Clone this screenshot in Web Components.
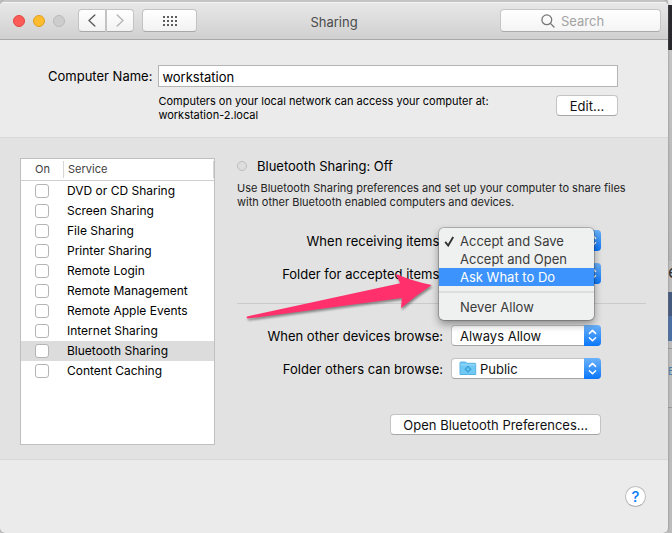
<!DOCTYPE html>
<html lang="en">
<head>
<meta charset="utf-8">
<title>Sharing</title>
<style>
  html, body { margin: 0; min-height: 100vh; }
  body { display: flex; font: 13px/16px Inter, "Liberation Sans", sans-serif; color: #000; background: #c9c9c9; }
</style>
</head>
<body>
<sharing-window></sharing-window>
<desktop-edge></desktop-edge>

<template id="t-window">
  <style>
    :host { flex: 1; min-width: 0; display: flex; flex-direction: column; background: #ebebeb; border-top: 2px solid #c4c4c4; border-radius: 5px; box-sizing: border-box; box-shadow: 0 0 2px #777; z-index: 1; overflow: hidden; }
    main { display: flex; flex-direction: column; flex: 1; }
    .panes { display: flex; gap: 22px; align-items: stretch; background: #e2e2e2; border: solid #d8d8d8; border-width: 1px 0; padding: 20px 22px 14px 20px; }
    footer { display: flex; justify-content: flex-end; padding: 26px 22px; }
    .help { width: 21px; height: 21px; border-radius: 50%; border: 1px solid #bdbdbd; border-bottom-color: #a8a8a8; background: #fff; color: #0c7dfa; font: 500 15px/18px Inter, sans-serif; padding: 0; }
  </style>
  <title-bar></title-bar>
  <main>
    <computer-name></computer-name>
    <section class="panes">
      <service-list></service-list>
      <bluetooth-pane></bluetooth-pane>
    </section>
    <footer><button class="help" aria-label="Help">?</button></footer>
  </main>
</template>

<template id="t-title">
  <style>
    :host { display: grid; grid-template-columns: 1fr auto 1fr; align-items: center; height: 37px; background: linear-gradient(#e8e8e8, #d0d0d0); border-bottom: 1px solid #a9a9a9; padding: 0 7px; box-shadow: inset 0 1px #f4f4f4; }
    .left { display: flex; align-items: center; gap: 8px; margin-left: 6px; }
    .dot { width: 12px; height: 12px; border-radius: 50%; padding: 0; border: 1px solid #e2463f; background: #fc5b57; }
    .dot.min { border-color: #e0a023; background: #fdbc2e; }
    .dot.max { border-color: #b9b9b9; background: #cdcdcd; }
    .nav { display: flex; gap: 1px; margin-left: 5px; }
    .tool { height: 23px; width: 27px; border: 1px solid #c3c3c3; border-bottom-color: #a8a8a8; background: linear-gradient(#fff, #f2f2f2); padding: 0; display: grid; place-items: center; border-radius: 4px; }
    .nav .tool:first-child { border-radius: 4px 1px 1px 4px; }
    .nav .tool:last-child { border-radius: 1px 4px 4px 1px; }
    .nav .tool { width: 28px; }
    .nav { gap: 0; }
    .all { width: 55px; }
    h1 { font: inherit; margin: 0; color: #4b4b4b; padding-top: 3px; }
    .search { justify-self: end; box-sizing: border-box; width: 161px; height: 23px; display: flex; align-items: center; gap: 6px; padding-left: 40px; border: 1px solid #c6c6c6; border-bottom-color: #ababab; border-radius: 4px; background: linear-gradient(#fff, #f4f4f4); }
    input { flex: 1; min-width: 0; border: 0; padding: 0; background: none; font: inherit; outline: 0; }
    input::placeholder { color: #a3a3a3; opacity: 1; }
    svg { display: block; fill: none; stroke-linecap: round; stroke-linejoin: round; }
  </style>
  <div class="left">
    <button class="dot" aria-label="Close"></button>
    <button class="dot min" aria-label="Minimize"></button>
    <button class="dot max" aria-label="Zoom"></button>
    <div class="nav">
      <button class="tool" aria-label="Back"><svg width="8" height="13" stroke="#626262" stroke-width="1.5"><path d="M6.8 1 1 6.5l5.8 5.5"/></svg></button>
      <button class="tool" aria-label="Forward"><svg width="8" height="13" stroke="#b6b6b6" stroke-width="1.5"><path d="M1.2 1 7 6.5 1.2 12"/></svg></button>
    </div>
    <button class="tool all" aria-label="Show all"><svg width="14" height="10" stroke="#5c5c5c" stroke-width="2" stroke-dasharray="2 2" style="stroke-linecap:butt"><path d="M0 1h14M0 5h14M0 9h14"/></svg></button>
  </div>
  <h1>Sharing</h1>
  <label class="search"><svg width="14" height="14" stroke="#757575" stroke-width="1.3"><circle cx="5.8" cy="5.8" r="4.9"/><path d="m9.4 9.4 3.6 3.6"/></svg><input placeholder="Search" aria-label="Search"></label>
</template>

<template id="t-name">
  <style>
    :host { display: grid; grid-template-columns: auto 1fr; column-gap: 6px; row-gap: 7px; padding: 25px 50px 15px 48px; align-items: center; }
    input { box-sizing: border-box; width: 100%; height: 22px; border: 1px solid #b4b4b4; background: #fff; font: inherit; padding: 2px 3px 0; outline: 0; border-radius: 0; }
    .info { grid-column: 2; display: flex; justify-content: space-between; align-items: flex-start; }
    p { margin: 0; font-size: 11px; line-height: 14px; }
    push-button { margin-top: 1px; }
    label { white-space: nowrap; }
  </style>
  <label for="n">Computer Name:</label><input id="n" value="workstation">
  <div class="info"><p>Computers on your local network can access your computer at:<br>workstation-2.local</p><push-button>Edit...</push-button></div>
</template>

<template id="t-push">
  <style>
    :host { display: inline-block; }
    button { font: inherit; height: 21px; min-width: 62px; padding: 0 12px; border: 1px solid #c4c4c4; border-bottom-color: #a6a6a6; border-radius: 4px; background: #fff; color: #111; white-space: nowrap; }
  </style>
  <button><slot></slot></button>
</template>

<template id="t-list">
  <style>
    :host { flex: 0 0 195px; box-sizing: border-box; background: #fff; border: 1px solid #bfbfbf; }
    table { width: 100%; border-collapse: collapse; table-layout: fixed; }
    th { text-align: left; font-weight: 400; font-size: 11px; color: #404040; height: 21px; padding: 0; border-bottom: 1px solid #cfcfcf; }
    th:first-child { width: 43px; }
    th span { display: block; line-height: 17px; padding-left: 14px; border-right: 1px solid #d6d6d6; }
    th:last-child span { padding-left: 4px; }
    td { height: 20px; padding: 0; white-space: nowrap; font-size: 12px; }
    td:first-child { padding-left: 14px; }
    td:last-child { padding-left: 3px; }
    tr.on td { background: #dcdcdc; }
    input { appearance: none; display: block; box-sizing: border-box; width: 14px; height: 14px; margin: 0; border: 1px solid #b4b4b4; border-radius: 3px; background: #fff; }
    label { display: block; }
  </style>
  <table><thead><tr><th scope="col"><span>On</span></th><th scope="col"><span>Service</span></th></tr></thead><tbody></tbody></table>
</template>

<template id="t-pane">
  <style>
    :host { flex: 1; min-width: 0; display: flex; flex-direction: column; }
    header { display: flex; align-items: center; gap: 10px; }
    .off { box-sizing: border-box; width: 10px; height: 10px; border: 1px solid #bdbdbd; border-radius: 50%; background: #dedede; }
    h2 { font: inherit; margin: 0; }
    p { margin: 7px 0 0; font-size: 11px; line-height: 14px; color: #222; }
    .pair { display: flex; flex-direction: column; gap: 12px; }
    .one { margin-top: 21px; position: relative; }
    hr { width: 100%; box-sizing: border-box; border: 0; border-top: 1px solid #cbcbcb; margin: 19px 0 21px; }
    .action { display: flex; justify-content: flex-end; padding: 35px 45px 10px 0; }
    choice-menu { position: absolute; left: 202px; top: -2px; z-index: 2; }
    .arrow { position: absolute; left: 5px; top: 40px; z-index: 3; pointer-events: none; filter: drop-shadow(1px 2px 1px #0006); overflow: visible; }
  </style>
  <header><span class="off"></span><h2>Bluetooth Sharing: Off</h2></header>
  <p>Use Bluetooth Sharing preferences and set up your computer to share files<br>with other Bluetooth enabled computers and devices.</p>
  <div class="pair one">
    <popup-row label="When receiving items:" value="Accept and Save"></popup-row>
    <popup-row label="Folder for accepted items:" value="Downloads"></popup-row>
    <choice-menu></choice-menu>
    <svg class="arrow" width="192" height="50" viewBox="242 271 192 50"><path fill="#ff306c" d="M247 317.4 400.2 284.3 395.5 274.7Q412 282 431.8 286 415 297 401 309.3L401.8 299 247.6 319.6Q246 318.5 247 317.4Z"/></svg>
  </div>
  <hr>
  <div class="pair">
    <popup-row label="When other devices browse:" value="Always Allow"></popup-row>
    <popup-row label="Folder others can browse:" value="Public" folder></popup-row>
  </div>
  <div class="action"><push-button>Open Bluetooth Preferences...</push-button></div>
</template>

<template id="t-popup">
  <style>
    :host { display: grid; grid-template-columns: 206px 150px; column-gap: 8px; align-items: center; }
    label { text-align: right; white-space: nowrap; }
    .box { display: grid; grid-template-columns: 1fr 17px; height: 21px; }
    select { grid-area: 1 / 1 / 2 / 3; appearance: none; box-sizing: border-box; width: 100%; height: 21px; margin: 0; border: 1px solid #c2c2c2; border-bottom-color: #a4a4a4; border-radius: 4px; background: #fff; color: #111; font: inherit; padding: 0 20px 0 8px; }
    :host([folder]) select { padding-left: 28px; }
    .step { grid-area: 1 / 2; background: linear-gradient(#6bb2fa, #0a76fb); border-radius: 0 4px 4px 0; pointer-events: none; z-index: 1; }
    .folder { grid-area: 1 / 1; align-self: center; margin-left: 8px; z-index: 1; display: none; pointer-events: none; }
    :host([folder]) .folder { display: block; }
  </style>
  <label for="s"></label>
  <div class="box">
    <select id="s"><option></option></select>
    <svg class="folder" width="18" height="15" viewBox="0 0 18 15"><path d="M1 13.5V2Q1 1 2 1h4.5l1.3 1.3H16q.7 0 .7.7v10.5z" fill="#70c8f4" stroke="#58b2e2"/><path d="M1.5 3.8h15" stroke="#9adcf9"/><path d="m9 5 3.2 3.2L9 11.4 5.8 8.2z" fill="#49aee2" stroke="#3c9fd6"/><circle cx="9" cy="8.2" r="1" fill="#78caf4"/></svg>
    <svg class="step" width="17" height="21" viewBox="0 0 17 21" fill="none" stroke="#fff" stroke-width="1.5" stroke-linecap="round" stroke-linejoin="round"><path d="m5.4 8.4 3.1-3 3.1 3M5.4 12.8l3.1 3 3.1-3"/></svg>
  </div>
</template>

<template id="t-menu">
  <style>
    :host { box-sizing: border-box; width: 155px; padding: 4px 0; background: #eff1f1; border-radius: 5px; box-shadow: 0 0 0 1px #0003, 0 4px 9px #0006; }
    button { display: flex; align-items: center; width: 100%; height: 18px; border: 0; padding: 0 0 0 5px; background: none; font: inherit; color: #3a3a3a; text-align: left; white-space: nowrap; }
    button.hot { background: #3c93fd; color: #fff; }
    .tick { width: 16px; height: 12px; flex: none; }
    hr { border: 0; border-top: 2px solid #dddfdf; margin: 5px 0; }
  </style>
  <div role="menu">
    <button role="menuitemradio" aria-checked="true"><svg class="tick" viewBox="0 0 16 12" fill="none" stroke="#333" stroke-width="1.9"><path d="m1.2 6.8 3 3.7L9.2 2"/></svg>Accept and Save</button>
    <button role="menuitemradio"><span class="tick"></span>Accept and Open</button>
    <button role="menuitemradio" class="hot"><span class="tick"></span>Ask What to Do</button>
    <hr>
    <button role="menuitemradio"><span class="tick"></span>Never Allow</button>
  </div>
</template>

<template id="t-edge">
  <style>
    :host { flex: 0 0 4px; display: flex; flex-direction: column; overflow: hidden; background: #bcbcbc; }
    div { flex: none; overflow: hidden; }
    .lite { height: 5px; background: #ececec; }
    .dark { height: 45px; background: #28282d; }
    .gap { height: 211px; background: linear-gradient(#c4c4c4, #b4b4b4); }
    .txt { height: 31px; font-size: 18px; line-height: 22px; color: #333; }
    .navy { height: 24px; background: #465a80; }
    .blue { height: 25px; background: #4b70a4; }
    .link { margin-top: 7px; border: solid #999; border-width: 1px 0; height: 58px; line-height: 44px; color: #477fa8; font-size: 11px; }
  </style>
  <div class="lite"></div><div class="dark"></div><div class="gap"></div><div class="txt">e</div><div class="navy"></div><div class="blue"></div><div class="link">E</div>
</template>

<script>
  const define = (name, id, setup) => customElements.define(name, class extends HTMLElement {
    connectedCallback() {
      if (this.shadowRoot) return;
      const root = this.attachShadow({ mode: "open" });
      root.append(document.getElementById(id).content.cloneNode(true));
      if (setup) setup(root, this);
    }
  });
  const services = ["DVD or CD Sharing", "Screen Sharing", "File Sharing", "Printer Sharing", "Remote Login", "Remote Management", "Remote Apple Events", "Internet Sharing", "Bluetooth Sharing", "Content Caching"];
  define("push-button", "t-push");
  define("popup-row", "t-popup", (root, host) => {
    root.querySelector("label").textContent = host.getAttribute("label");
    root.querySelector("option").textContent = host.getAttribute("value");
  });
  define("choice-menu", "t-menu");
  define("title-bar", "t-title");
  define("computer-name", "t-name");
  define("service-list", "t-list", root => {
    root.querySelector("tbody").innerHTML = services.map((s, i) =>
      `<tr${s === "Bluetooth Sharing" ? ' class="on"' : ""}><td><input type="checkbox" id="c${i}"></td><td><label for="c${i}">${s}</label></td></tr>`).join("");
  });
  define("bluetooth-pane", "t-pane");
  define("sharing-window", "t-window");
  define("desktop-edge", "t-edge");
</script>
</body>
</html>
